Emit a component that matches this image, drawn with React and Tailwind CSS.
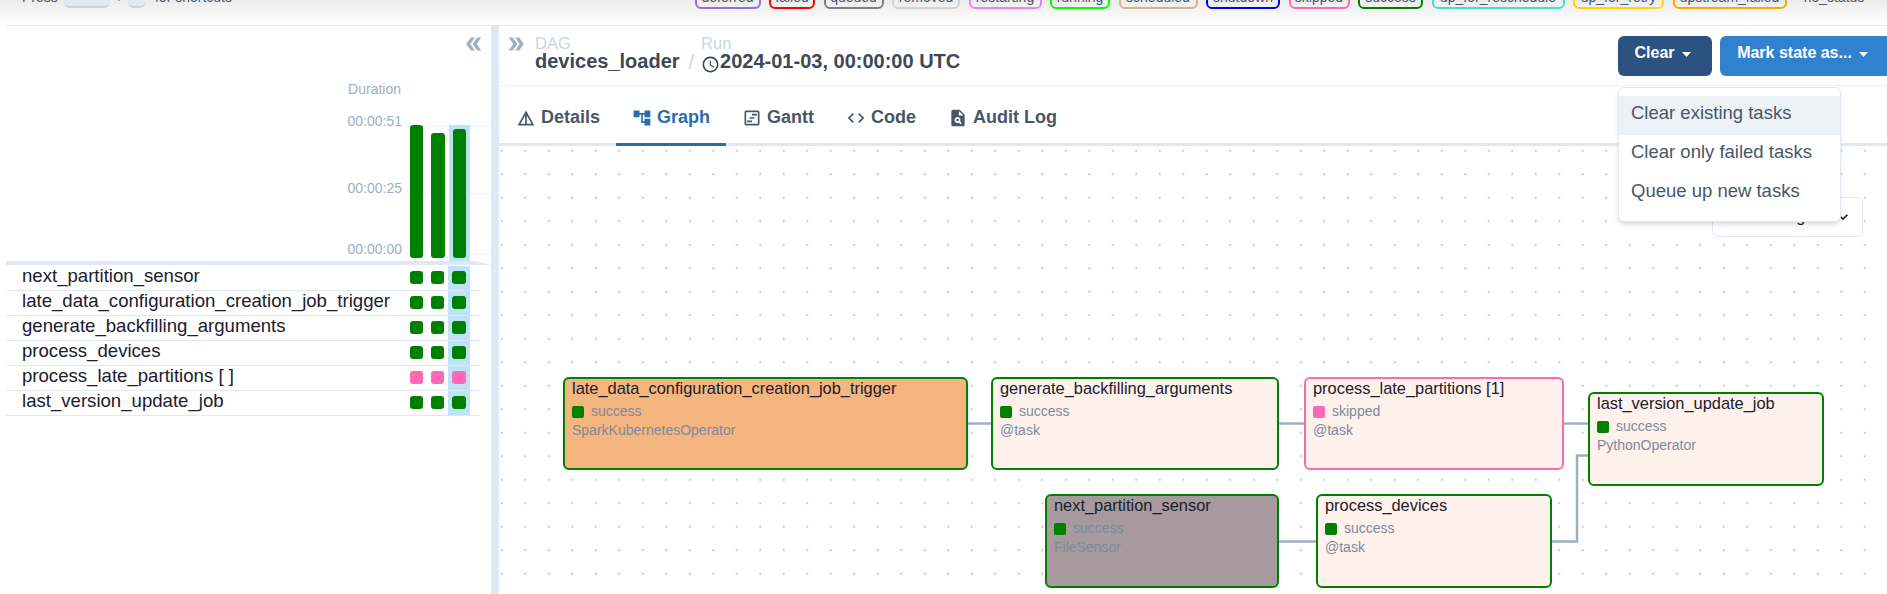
import {
  MdDoubleArrow,
  MdDetails,
  MdAccountTree,
  MdOutlineViewTimeline,
  MdCode,
  MdPlagiarism,
  MdOutlineAccessTime,
  MdKeyboardArrowDown,
} from "react-icons/md";

const legend = [
  { label: "deferred", cls: "w-[66px] border-[#9370db]" },
  { label: "failed", cls: "w-[46px] border-[#ff0000]" },
  { label: "queued", cls: "w-[60px] border-[#808080]" },
  { label: "removed", cls: "w-[68px] border-[#d3d3d3]" },
  { label: "restarting", cls: "w-[73px] border-[#ee82ee]" },
  { label: "running", cls: "w-[60px] border-[#00ff00]" },
  { label: "scheduled", cls: "w-[79px] border-[#d2b48c]" },
  { label: "shutdown", cls: "w-[74px] border-[#0000ff]" },
  { label: "skipped", cls: "w-[61px] border-[#ff69b4]" },
  { label: "success", cls: "w-[65px] border-[#008000]" },
  { label: "up_for_reschedule", cls: "w-[133px] border-[#40e0d0]" },
  { label: "up_for_retry", cls: "w-[91px] border-[#ffd700]" },
  { label: "upstream_failed", cls: "w-[114px] border-[#ffa500]" },
  { label: "no_status", cls: "w-[78px] border-transparent" },
];

const rows = [
  { name: "next_partition_sensor", color: "bg-[#008000]" },
  { name: "late_data_configuration_creation_job_trigger", color: "bg-[#008000]" },
  { name: "generate_backfilling_arguments", color: "bg-[#008000]" },
  { name: "process_devices", color: "bg-[#008000]" },
  { name: "process_late_partitions [ ]", color: "bg-[#ff69b4]" },
  { name: "last_version_update_job", color: "bg-[#008000]" },
];

const tabs = [
  { label: "Details", icon: MdDetails },
  { label: "Graph", icon: MdAccountTree, active: true },
  { label: "Gantt", icon: MdOutlineViewTimeline },
  { label: "Code", icon: MdCode },
  { label: "Audit Log", icon: MdPlagiarism },
];

const nodes = [
  {
    title: "late_data_configuration_creation_job_trigger",
    state: "success",
    operator: "SparkKubernetesOperator",
    box: "left-[64px] top-[231px] w-[405px] h-[93px] bg-[#f4b57f] border-[#008000]",
    square: "bg-[#008000]",
  },
  {
    title: "generate_backfilling_arguments",
    state: "success",
    operator: "@task",
    box: "left-[492px] top-[231px] w-[288px] h-[93px] bg-[#fff1ec] border-[#008000]",
    square: "bg-[#008000]",
  },
  {
    title: "process_late_partitions [1]",
    state: "skipped",
    operator: "@task",
    box: "left-[805px] top-[231px] w-[260px] h-[93px] bg-[#fff1ec] border-[#ff69b4]",
    square: "bg-[#ff69b4]",
  },
  {
    title: "last_version_update_job",
    state: "success",
    operator: "PythonOperator",
    box: "left-[1089px] top-[246px] w-[236px] h-[94px] bg-[#fff1ec] border-[#008000]",
    square: "bg-[#008000]",
  },
  {
    title: "next_partition_sensor",
    state: "success",
    operator: "FileSensor",
    box: "left-[546px] top-[348px] w-[234px] h-[94px] bg-[#a69a9f] border-[#008000]",
    square: "bg-[#008000]",
  },
  {
    title: "process_devices",
    state: "success",
    operator: "@task",
    box: "left-[817px] top-[348px] w-[236px] h-[94px] bg-[#fff1ec] border-[#008000]",
    square: "bg-[#008000]",
  },
];

function Caret() {
  return (
    <svg width="9" height="5" viewBox="0 0 9 5" className="ml-[7px] mt-[4px]">
      <polygon points="0,0 9,0 4.5,5" fill="#fff" />
    </svg>
  );
}

function TopStrip() {
  return (
    <div className="h-[26px] shrink-0 overflow-hidden bg-gradient-to-b from-[#ececec] to-white">
      <div className="ml-[6px] flex h-[26px] border-b border-[#e2e8f0]">
        <div className="-mt-[15px] ml-[16px] flex h-[24px] items-center text-[14px] text-[#4a5568]">
          <span>Press</span>
          <span className="ml-[6px] mr-[5px] h-[22px] w-[46px] rounded-md border-b-2 border-[#cbd5e0] bg-[#e2e8f0]" />
          <span>+</span>
          <span className="ml-[5px] mr-[9px] h-[22px] w-[18px] rounded-md border-b-2 border-[#cbd5e0] bg-[#e2e8f0]" />
          <span>for shortcuts</span>
        </div>
        <div className="-mt-[15px] ml-auto mr-[14px] flex h-[24px] gap-[8.5px]">
          {legend.map((item) => (
            <div
              key={item.label}
              className={`flex items-center justify-center rounded-md border-2 text-[14px] text-[#4a5568] ${item.cls}`}
            >
              {item.label}
            </div>
          ))}
        </div>
      </div>
    </div>
  );
}

function DurationChart() {
  return (
    <div className="flex h-[149px] justify-end">
      <div className="mr-[4px] flex flex-col items-end text-[14px] leading-[18px] text-[#a0aec0]">
        <span>00:00:51</span>
        <span className="mt-[49px]">00:00:25</span>
        <span className="mt-[43px]">00:00:00</span>
      </div>
      <svg width="85" height="149" viewBox="0 0 85 149">
        <line x1="0" x2="85" y1="14.5" y2="14.5" stroke="#edf2f7" />
        <line x1="0" x2="85" y1="81.5" y2="81.5" stroke="#edf2f7" />
        <line x1="0" x2="85" y1="142.5" y2="142.5" stroke="#edf2f7" />
        <rect x="43" y="13" width="21" height="136" fill="#bee3f8" />
        <rect x="4" y="13" width="13" height="133" rx="3" fill="#008000" />
        <rect x="25" y="21" width="14" height="125" rx="3" fill="#008000" />
        <rect x="47" y="17" width="13" height="129" rx="3" fill="#008000" />
      </svg>
    </div>
  );
}

function LeftPanel() {
  return (
    <div className="ml-[6px] flex w-[485px] shrink-0 flex-col">
      <div className="flex h-[24px] justify-end pr-[6px] pt-[7px]">
        <MdDoubleArrow size={22} className="rotate-180 text-[#a0aec0]" />
      </div>
      <div className="mt-[30px] flex justify-end pr-[90px] text-[14px] leading-[18px] text-[#a0aec0]">Duration</div>
      <div className="mt-[14px]">
        <DurationChart />
      </div>
      <div className="h-[4px] bg-[#e2e8f0] [clip-path:polygon(0_0,97%_0,100%_100%,0_100%)]" />
      <div className="mt-[1px] w-[475px]">
        {rows.map((row) => (
          <div key={row.name} className="flex h-[25px] border-b border-[#e2e8f0] pr-[11px]">
            <div className="flex-1 pl-[16px] text-[18.6px] leading-[20px] text-[#1a202c]">{row.name}</div>
            <div className={`mt-[5px] h-[13px] w-[13px] rounded-[3px] ${row.color}`} />
            <div className={`ml-[8px] mt-[5px] h-[13px] w-[13px] rounded-[3px] ${row.color}`} />
            <div className="ml-[4px] w-[22px] bg-[#bee3f8] pl-[4px] pt-[5px]">
              <div className={`h-[13px] w-[14px] rounded-[3px] ${row.color}`} />
            </div>
          </div>
        ))}
      </div>
    </div>
  );
}

function Header() {
  return (
    <div className="flex h-[60px] shrink-0 border-b border-[#edf2f7]">
      <div className="ml-[6px] mt-[7px] h-[24px]">
        <MdDoubleArrow size={22} className="text-[#a0aec0]" />
      </div>
      <div className="ml-[8px] mt-[9px]">
        <div className="text-[16.5px] leading-[17px] text-[#cbd5e0]">DAG</div>
        <div className="-mt-[3px] text-[20px] font-bold leading-[24px] text-[#3f4856]">devices_loader</div>
      </div>
      <div className="ml-[9px] mt-[24px] text-[20px] leading-[24px] text-[#cbd5e0]">/</div>
      <div className="ml-[7px] mt-[9px]">
        <div className="text-[16.5px] leading-[17px] text-[#cbd5e0]">Run</div>
        <div className="-mt-[3px] flex text-[20px] font-bold leading-[24px] text-[#3f4856]">
          <MdOutlineAccessTime size={19} className="mt-[6px] text-[#3f4856]" />
          <span>2024-01-03, 00:00:00 UTC</span>
        </div>
      </div>
      <div className="ml-auto mt-[10px] flex h-[40px] gap-[8px]">
        <button className="flex w-[94px] items-center justify-center rounded-md bg-[#2c5282] pb-[7px] pr-[5px] text-[16px] font-bold text-white">
          Clear
          <Caret />
        </button>
        <button className="flex w-[167px] items-center justify-center rounded-l-md bg-[#3182ce] pb-[7px] pr-[2px] text-[16px] font-bold text-white">
          Mark state as...
          <Caret />
        </button>
      </div>
    </div>
  );
}

function Tabs() {
  return (
    <div className="flex h-[60px] shrink-0 border-b-[3px] border-[#e2e8f0] pl-[1px]">
      {tabs.map((tab) => (
        <div
          key={tab.label}
          className={`-mb-[3px] flex items-center gap-[5px] border-b-[3px] px-[16px] pt-[6px] text-[18px] font-bold ${
            tab.active ? "border-[#2b6cb0] text-[#2b6cb0]" : "border-transparent text-[#4a5568]"
          }`}
        >
          <tab.icon size={20} />
          <span>{tab.label}</span>
        </div>
      ))}
    </div>
  );
}

function GraphNode({ node }) {
  return (
    <div className={`absolute rounded-[6px] border-2 pl-[7px] ${node.box}`}>
      <div className="-mt-[1px] text-[16.4px] leading-[20px] text-[#1a202c]">{node.title}</div>
      <div className="mt-[5px] flex items-center gap-[7px] text-[14px] leading-[17px] text-[#7d8aa0]">
        <span className={`h-[12px] w-[12px] rounded-[2px] ${node.square}`} />
        <span>{node.state}</span>
      </div>
      <div className="mt-[2px] text-[14px] leading-[17px] text-[#7d8aa0]">{node.operator}</div>
    </div>
  );
}

function GraphCanvas() {
  return (
    <div className="relative flex-1 overflow-hidden bg-white bg-[radial-gradient(circle,#c3cad5_0.7px,transparent_0.85px)] bg-size-[23.5px_23.5px] bg-position-[-9px_-7px]">
      <svg className="absolute inset-0" width="1388" height="448" fill="none" stroke="#a0aec0" strokeWidth="2.5">
        <path d="M469 277.5H493" />
        <path d="M780 277.5H805" />
        <path d="M1065 277.5H1089" />
        <path d="M780 395.5H818" />
        <path d="M1053 395.5H1078V309.5H1089" />
      </svg>
      {nodes.map((node) => (
        <GraphNode key={node.title} node={node} />
      ))}
      <div className="absolute left-[1213px] top-[51px] flex h-[40px] w-[151px] items-center rounded-md border border-[#e2e8f0] bg-white pl-[18px] text-[16px] text-[#1a202c]">
        <span>Left -&gt; Right</span>
        <MdKeyboardArrowDown size={20} className="ml-auto mr-[9px]" />
      </div>
    </div>
  );
}

function ClearMenu() {
  return (
    <div className="absolute left-[1119px] top-[61px] w-[223px] rounded-md border border-[#e2e8f0] bg-white pb-[8px] pt-[8px] text-[18.5px] text-[#4a5568] shadow-md">
      <div className="flex h-[39px] items-center bg-[#edf2f7] pb-[5px] pl-[12px]">Clear existing tasks</div>
      <div className="flex h-[39px] items-center pb-[5px] pl-[12px]">Clear only failed tasks</div>
      <div className="flex h-[39px] items-center pb-[5px] pl-[12px]">Queue up new tasks</div>
    </div>
  );
}

export default function App() {
  return (
    <div className="flex h-[594px] w-[1887px] flex-col overflow-hidden bg-white font-['Liberation_Sans',Arial,sans-serif]">
      <TopStrip />
      <div className="flex min-h-0 flex-1">
        <LeftPanel />
        <div className="w-[8px] shrink-0 bg-[#e2e8f0]" />
        <div className="relative flex min-w-0 flex-1 flex-col">
          <Header />
          <Tabs />
          <GraphCanvas />
          <ClearMenu />
        </div>
      </div>
    </div>
  );
}
